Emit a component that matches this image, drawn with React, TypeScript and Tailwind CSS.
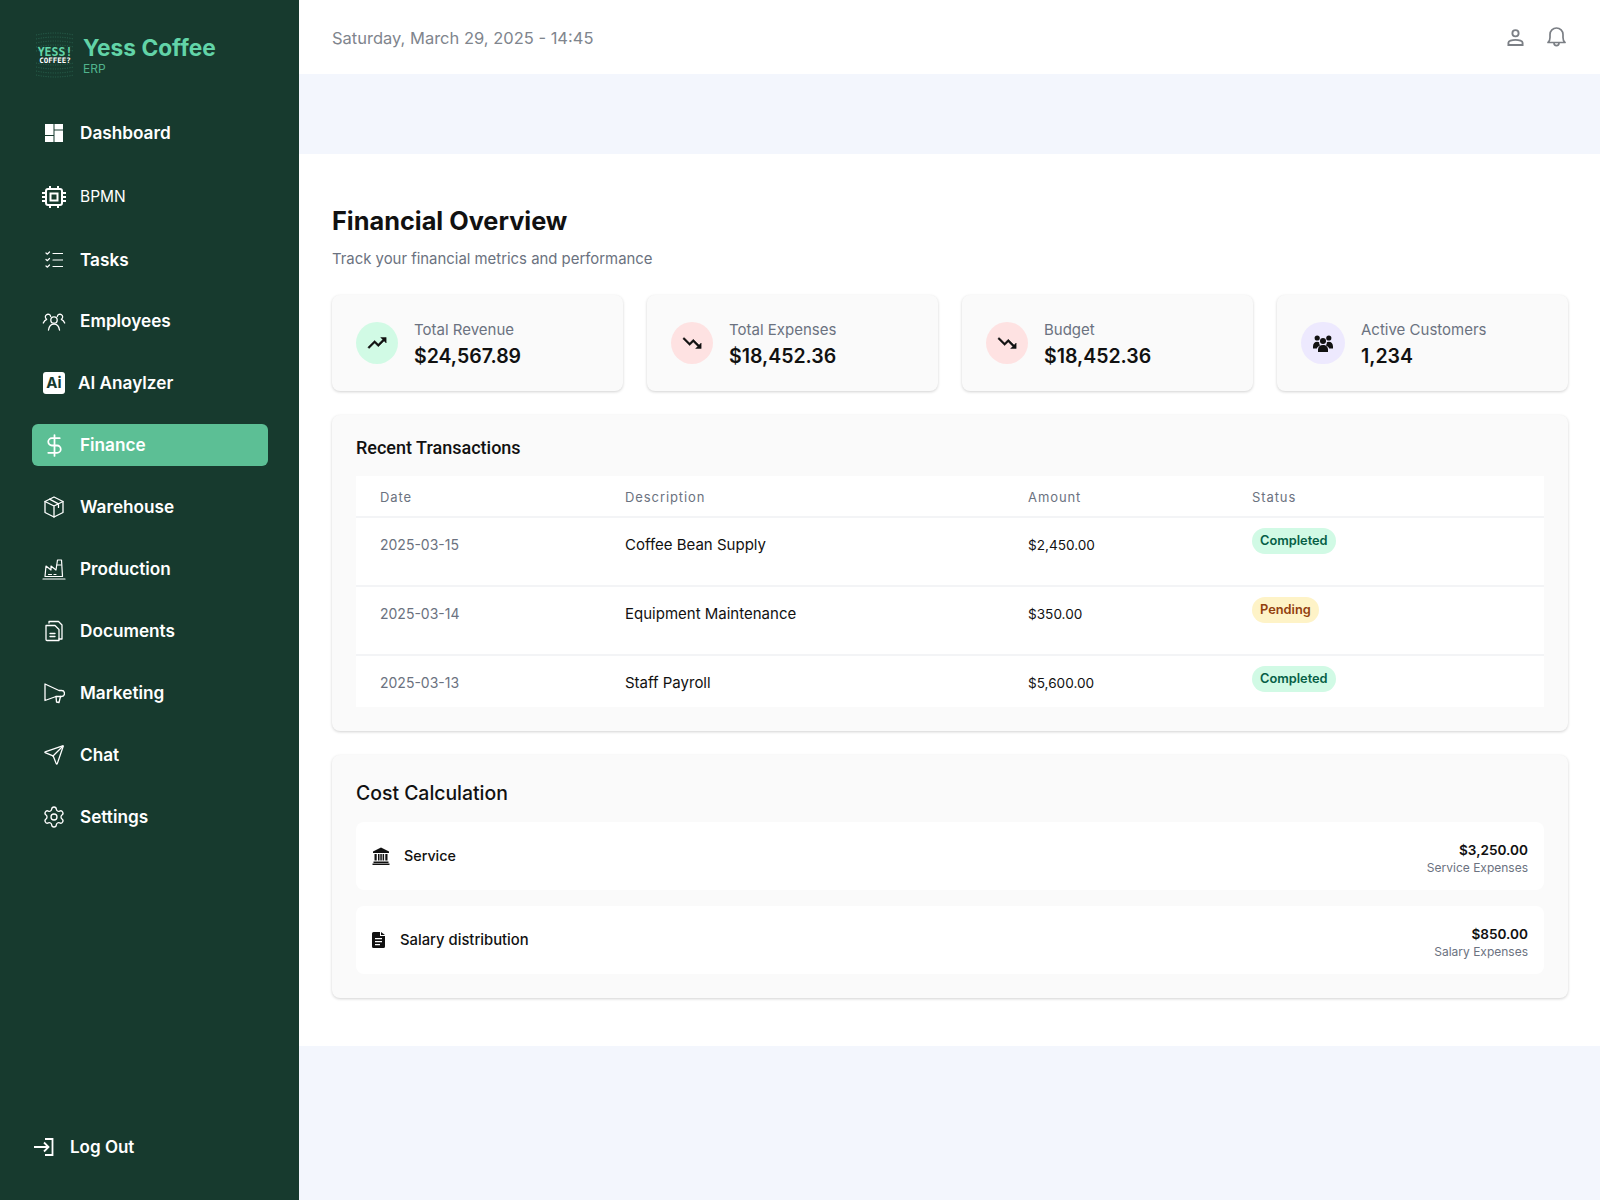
import { DollarSign, Send, Settings } from "lucide-react";
import type { ReactNode } from "react";

const sw = { fill: "none", stroke: "currentColor", strokeWidth: 1.5, strokeLinecap: "round", strokeLinejoin: "round" } as const;

function Logo() {
  const arcs = [6, 10, 14, 18, 22];
  return (
    <svg className="h-[46px] w-[46px] shrink-0" viewBox="0 0 46 46">
      <g fill="none" stroke="#2f6d58" strokeWidth="0.8" strokeDasharray="1 1.4">
        {arcs.map((a) => (
          <path key={a} d={`M4 ${a - 3} Q23 ${a - 7} 42 ${a - 3}`} />
        ))}
        {arcs.map((a) => (
          <path key={a} d={`M4 ${a + 25} Q23 ${a + 29} 42 ${a + 25}`} />
        ))}
      </g>
      <text x="23" y="24" textAnchor="middle" fill="#62d4a8" fontFamily="'DejaVu Sans Mono', monospace" fontWeight="700" fontSize="11.5">YESS!</text>
      <text x="23" y="31" textAnchor="middle" fill="#ffffff" fontFamily="'DejaVu Sans Mono', monospace" fontWeight="700" fontSize="7.5">COFFEE?</text>
    </svg>
  );
}

const icons: Record<string, ReactNode> = {
  Dashboard: (
    <svg className="h-[18px] w-[18px]" viewBox="0 0 18 18" fill="currentColor">
      <path d="M0 0h8.500v11H0zM9.500 0H18v5.500H9.500zM0 12h8.500v6H0zM9.500 6.500H18V18H9.500z" />
    </svg>
  ),
  BPMN: (
    <svg className="h-6 w-6" viewBox="0 0 24 24" fill="none" stroke="currentColor" strokeWidth="2">
      <rect x="4" y="4" width="16" height="16" rx="2" />
      <rect x="8.500" y="8.500" width="7" height="7" />
      <path d="M8 1v3M16 1v3M8 20v3M16 20v3M0 8h4M0 12h4M0 16h4M20 8h4M20 12h4M20 16h4" />
    </svg>
  ),
  Tasks: (
    <svg className="h-[18px] w-[18px]" viewBox="0 0 18 18" {...sw} strokeWidth={1.2}>
      <path d="M1 2l1.200 1.200L4.500 1M1 8.500l1.200 1.200L4.500 7.500M1 15l1.200 1.200L4.500 14M8 2.500h10M8 9h10M8 15.500h10" />
    </svg>
  ),
  Employees: (
    <svg className="h-6 w-6" viewBox="0 0 24 24" {...sw} strokeWidth={1.3}>
      <circle cx="12" cy="11" r="3.200" />
      <path d="M6.500 21c.6-3.500 2.800-6 5.500-6s4.900 2.500 5.500 6" />
      <path d="M8.700 7.500a2.700 2.700 0 1 0-4 2.800C3 11 2 12.300 1.300 14M15.300 7.500a2.700 2.700 0 1 1 4 2.800c1.700.7 2.700 2 3.400 3.700" />
    </svg>
  ),
  "AI Anaylzer": (
    <span className="flex h-[22px] w-[22px] items-center justify-center rounded-[3px] bg-white text-[15px] font-bold text-[#173a2e] font-['Inter',sans-serif]">Ai</span>
  ),
  Finance: <DollarSign className="h-[25px] w-[25px]" strokeWidth={1.7} />,
  Warehouse: (
    <svg className="h-[22px] w-[22px]" viewBox="0 0 22 22" {...sw} strokeWidth={1.3}>
      <path d="M11 1l9 4.500v11L11 21l-9-4.500v-11z" />
      <path d="M2 5.500L11 10l9-4.500M11 10v11M6.500 3.200l9 4.600v3.600" />
    </svg>
  ),
  Production: (
    <svg className="h-6 w-6" viewBox="0 0 24 24" {...sw} strokeWidth={1.2}>
      <path d="M1 22h22M3 19.500L4 9l5 4V9l5 4 1.500-10h4l1 16.500z" />
      <path d="M6.500 17.500h3M12 17.500h2M15 8h4" />
    </svg>
  ),
  Documents: (
    <svg className="h-[22px] w-[22px]" viewBox="0 0 22 22" {...sw} strokeWidth={1.3}>
      <path d="M3 5.500h9l4 4v11H4a1 1 0 0 1-1-1z" />
      <path d="M6 3V1.500h9.500L19 5v14h-3M7 13.500h5M7 16.500h5" />
    </svg>
  ),
  Marketing: (
    <svg className="h-[22px] w-[22px]" viewBox="0 0 22 22" {...sw} strokeWidth={1.3}>
      <path d="M2 2l14 6.500h2.500a3 3 0 0 1 0 6H13L2 18.500z" />
      <path d="M13 14.500l.5 5.500 2.500.5 1.500-6" />
    </svg>
  ),
  Chat: <Send className="h-[22px] w-[22px]" strokeWidth={1.4} />,
  Settings: <Settings className="h-6 w-6" strokeWidth={1.3} />,
};

const nav = [
  { label: "Dashboard", h: "h-[42px]", text: "ml-1 text-[17.200px] font-semibold" },
  { label: "BPMN", h: "h-[46px]", text: "ml-1 text-[15.500px] font-normal" },
  { label: "Tasks", h: "h-[40px]", text: "ml-1 text-[17.200px] font-semibold" },
  { label: "Employees", h: "h-[42px]", text: "ml-1 text-[17.200px] font-semibold" },
  { label: "AI Anaylzer", h: "h-[42px]", text: "ml-[2px] text-[17.200px] font-semibold" },
  { label: "Finance", h: "h-[42px]", text: "ml-1 text-[17.200px] font-semibold" },
  { label: "Warehouse", h: "h-[42px]", text: "ml-1 text-[17.200px] font-semibold" },
  { label: "Production", h: "h-[42px]", text: "ml-1 text-[17.200px] font-semibold" },
  { label: "Documents", h: "h-[42px]", text: "ml-1 text-[17.200px] font-semibold" },
  { label: "Marketing", h: "h-[42px]", text: "ml-1 text-[17.200px] font-semibold" },
  { label: "Chat", h: "h-[42px]", text: "ml-1 text-[17.200px] font-semibold" },
  { label: "Settings", h: "h-[42px]", text: "ml-1 text-[17.200px] font-semibold" },
];

const TrendUp = () => (
  <svg className="h-[22px] w-[22px]" viewBox="0 0 24 24" fill="currentColor" stroke="currentColor" strokeWidth="0.5">
    <path d="M16 6l2.290 2.290-4.880 4.880-4-4L2 16.590 3.410 18l6-6 4 4 6.300-6.290L22 12V6z" />
  </svg>
);
const TrendDown = () => (
  <svg className="h-[22px] w-[22px]" viewBox="0 0 24 24" fill="currentColor" stroke="currentColor" strokeWidth="0.5">
    <path d="M16 18l2.290-2.290-4.880-4.880-4 4L2 7.410 3.410 6l6 6 4-4 6.300 6.290L22 12v6z" />
  </svg>
);
const People = () => (
  <svg className="h-[17px] w-5" viewBox="0 0 20 17" fill="currentColor">
    <circle cx="4.200" cy="3" r="2.600" />
    <circle cx="15.800" cy="3" r="2.600" />
    <circle cx="10" cy="6" r="3" />
    <path d="M5 17v-2.500C5 12 7 10 10 10s5 2 5 4.500V17zM0 11.500C0 8.500 1.800 6.700 4.200 6.700c.8 0 1.500.2 2 .5-.2 1.300.3 2.300 1 3C5.600 11 4.300 12 3.800 13.500H0zM20 11.500c0-3-1.800-4.800-4.200-4.800-.8 0-1.500.2-2 .5.2 1.300-.3 2.300-1 3 1.600.8 2.900 1.800 3.400 3.300H20z" />
  </svg>
);

const stats = [
  { label: "Total Revenue", value: "$24,567.89", bg: "bg-[#d1fae5]", w: "w-[42px]", icon: <TrendUp /> },
  { label: "Total Expenses", value: "$18,452.36", bg: "bg-[#fee2e2]", w: "w-[42px]", icon: <TrendDown /> },
  { label: "Budget", value: "$18,452.36", bg: "bg-[#fee2e2]", w: "w-[42px]", icon: <TrendDown /> },
  { label: "Active Customers", value: "1,234", bg: "bg-[#ede9fe]", w: "w-11", icon: <People /> },
];

const rows = [
  { date: "2025-03-15", desc: "Coffee Bean Supply", amount: "$2,450.00", status: "Completed", h: "h-[69px]" },
  { date: "2025-03-14", desc: "Equipment Maintenance", amount: "$350.00", status: "Pending", h: "h-[69px]" },
  { date: "2025-03-13", desc: "Staff Payroll", amount: "$5,600.00", status: "Completed", h: "h-[51px]" },
];

const costs = [
  {
    label: "Service",
    amount: "$3,250.00",
    sub: "Service Expenses",
    gap: "gap-[14px]",
    text: "text-[14.300px]",
    icon: (
      <svg className="h-[18px] w-[18px]" viewBox="0 0 18 18" fill="currentColor">
        <path d="M9 .500L1 4.500V6h16V4.500zM2.500 7h2.200v6.500H2.500zM6 7h1.500v6.500H6zM8.300 7h1.500v6.500H8.300zM10.600 7h1.500v6.500h-1.500zM13.300 7h2.200v6.500h-2.200zM1.500 14.500h15V16h-15zM.500 16.500h17V18H.500z" />
      </svg>
    ),
  },
  {
    label: "Salary distribution",
    amount: "$850.00",
    sub: "Salary Expenses",
    gap: "gap-[15px]",
    text: "text-[14.800px]",
    icon: (
      <svg className="h-[16px] w-[13px]" viewBox="0 0 13 16" fill="currentColor">
        <path fillRule="evenodd" d="M1.500 0H8v4h5v10.500a1.500 1.500 0 0 1-1.500 1.500h-10A1.500 1.500 0 0 1 0 14.500v-13A1.500 1.500 0 0 1 1.500 0zM3 6v1.300h7V6zM3 9v1.300h7V9zM3 12v1.300h5V12zM9 0l4 3H9z" />
      </svg>
    ),
  },
];

function StatusBadge({ status }: { status: string }) {
  const cls = status === "Pending" ? "bg-[#fef3c7] text-[#92400e]" : "bg-[#d1fae5] text-[#065f46]";
  return <span className={`inline-flex h-[26px] items-center rounded-full px-2 text-[12.800px] font-semibold ${cls}`}>{status}</span>;
}

export default function App() {
  return (
    <div className="flex min-h-[1200px] bg-[#f3f6fd] font-['Inter',sans-serif] text-[#111111]">
      <aside className="flex w-[299px] shrink-0 flex-col justify-between bg-[#173a2e] pb-10 pl-8 pr-[31px] pt-8 text-white">
        <div>
          <div className="flex items-center gap-[5px]">
            <Logo />
            <div>
              <div className="text-[22.700px] font-bold leading-[28px] text-[#62d4a8]">Yess Coffee</div>
              <div className="text-xs leading-[14px] text-[#62d4a8]/80">ERP</div>
            </div>
          </div>
          <nav className="mt-[34px] flex flex-col gap-5">
            {nav.map((n) => (
              <div key={n.label} className={`flex items-center rounded-md ${n.h} ${n.label === "Finance" ? "bg-[#5cbf95]" : ""}`}>
                <span className="flex w-[44px] shrink-0 items-center justify-center">{icons[n.label]}</span>
                <span className={n.text}>{n.label}</span>
              </div>
            ))}
          </nav>
        </div>
        <div className="flex items-center gap-4 pl-[2px]">
          <svg className="h-[18px] w-5" viewBox="0 0 20 18" fill="none" stroke="currentColor" strokeWidth="1.800">
            <path d="M11 1h7.500v16H11M0 9h14M10 4.500L14.500 9 10 13.500" />
          </svg>
          <span className="text-[17px] font-semibold">Log Out</span>
        </div>
      </aside>

      <div className="flex min-w-0 flex-1 flex-col">
        <header className="flex h-[74px] items-center justify-between bg-white pl-[33px] pr-[34px]">
          <span className="pt-[3px] text-[16.500px] text-[#80858d]">Saturday, March 29, 2025 - 14:45</span>
          <div className="flex items-center gap-[23px] text-[#7b7f85]">
            <svg className="h-[17px] w-[17px]" viewBox="0 0 18 18" fill="none" stroke="currentColor" strokeWidth="2">
              <circle cx="9" cy="4.500" r="3.300" />
              <path d="M1.500 17v-2.500c0-1.500 3.500-3 7.500-3s7.500 1.500 7.500 3V17z" />
            </svg>
            <svg className="h-[20px] w-[19px]" viewBox="0 0 19 20" fill="none" stroke="currentColor" strokeWidth="1.700" strokeLinejoin="round">
              <path d="M1 15.500c1.500-1 2-2.500 2-5V7.500a6.500 6.500 0 0 1 13 0v3c0 2.500.5 4 2 5zM7 16c0 3.500 5 3.500 5 0" />
            </svg>
          </div>
        </header>
        <div className="h-[80px]" />
        <main className="bg-white pb-12 pl-[33px] pr-8 pt-[51px]">
          <h1 className="text-[25.300px] font-bold leading-8">Financial Overview</h1>
          <p className="mt-3 text-[14.900px] leading-5 text-[#6b7280]">Track your financial metrics and performance</p>

          <div className="mt-[26px] grid grid-cols-4 gap-6">
            {stats.map((s) => (
              <div key={s.label} className="flex h-[96px] items-center gap-4 rounded-lg bg-[#fafafa] px-6 shadow-[0_1px_3px_rgba(0,0,0,0.18)]">
                <div className={`flex h-[42px] items-center justify-center rounded-full ${s.w} ${s.bg}`}>{s.icon}</div>
                <div className="pt-1">
                  <div className="text-[15px] leading-5 text-[#6b7280]">{s.label}</div>
                  <div className="mt-[2px] text-[19.500px] font-semibold leading-7">{s.value}</div>
                </div>
              </div>
            ))}
          </div>

          <section className="mt-6 rounded-lg bg-[#fafafa] px-6 pb-6 pt-[19px] shadow-[0_1px_3px_rgba(0,0,0,0.18)]">
            <h2 className="text-lg font-medium leading-7 font-['Roboto',sans-serif]">Recent Transactions</h2>
            <div className="mt-[14px] bg-white">
              <div className="grid h-[42px] grid-cols-[245px_403px_224px_1fr] items-center border-b-2 border-[#f3f4f6] px-6 pt-1 text-[13px] tracking-[0.07em] text-[#6b7280]">
                <span>Date</span>
                <span>Description</span>
                <span>Amount</span>
                <span>Status</span>
              </div>
              {rows.map((r, i) => (
                <div key={r.date} className={`grid grid-cols-[245px_403px_224px_1fr] px-6 pt-[15px] ${r.h} ${i < 2 ? "border-b-2 border-[#f3f4f6]" : ""}`}>
                  <span className="text-[14px] leading-6 text-[#6b7280]">{r.date}</span>
                  <span className="text-[15px] leading-6">{r.desc}</span>
                  <span className="text-[13.600px] leading-6">{r.amount}</span>
                  <div className="-mt-[6px]">
                    <StatusBadge status={r.status} />
                  </div>
                </div>
              ))}
            </div>
          </section>

          <section className="mt-6 rounded-lg bg-[#fafafa] p-6 shadow-[0_1px_3px_rgba(0,0,0,0.18)]">
            <h2 className="text-[19.400px] font-medium leading-7">Cost Calculation</h2>
            <div className="mt-[15px] flex flex-col gap-4">
              {costs.map((c) => (
                <div key={c.label} className={`flex h-[68px] items-center rounded-lg bg-white px-4 ${c.gap}`}>
                  {c.icon}
                  <span className={`${c.text} font-medium`}>{c.label}</span>
                  <div className="ml-auto pt-1 text-right">
                    <div className="text-[13.600px] font-semibold leading-5">{c.amount}</div>
                    <div className="text-[12px] leading-4 text-[#6b7280]">{c.sub}</div>
                  </div>
                </div>
              ))}
            </div>
          </section>
        </main>
      </div>
    </div>
  );
}
